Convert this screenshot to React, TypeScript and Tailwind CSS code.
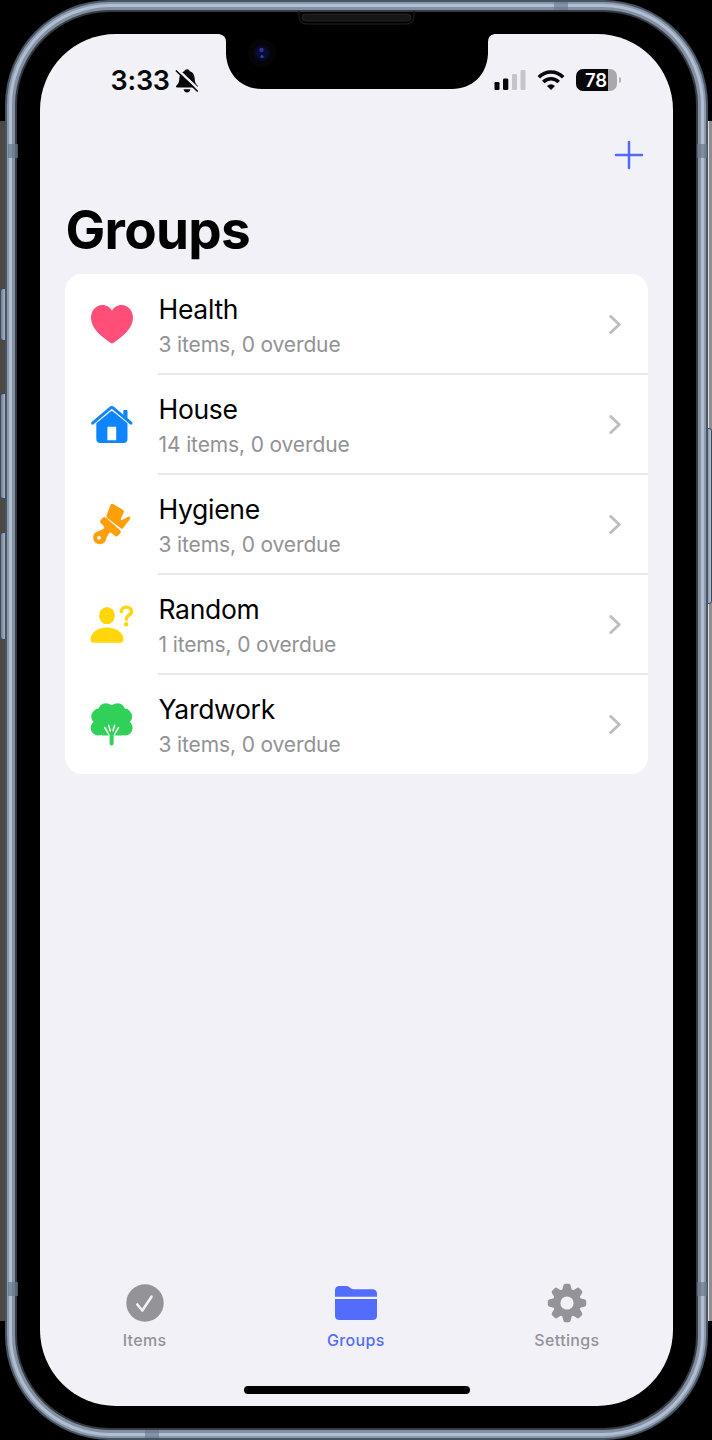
import type { ReactNode } from "react";

type Group = { name: string; count: number; icon: ReactNode };

const Heart = () => (
  <svg viewBox="0 0 44 44" className="size-11 shrink-0" fill="#ff4f78">
    <path d="M22 41.3c-.9 0-1.7-.6-2.700-1.300C9 33.200 1 25 1 15.800 1 8.500 6 3 12.500 3c4.200 0 7.600 2.300 9.500 5.700C23.900 5.300 27.300 3 31.500 3 38 3 43 8.500 43 15.800c0 9.200-8 17.400-18.300 24.200-1 .7-1.800 1.300-2.700 1.300z" />
  </svg>
);

const House = () => (
  <svg viewBox="0 0 44 44" className="size-11 shrink-0" fill="#0f84ff">
    <path d="M33.300 13V9.300c0-.9.5-1.400 1.300-1.400h1.600c.8 0 1.300.5 1.300 1.400v8z" />
    <path d="M2.600 21.200 20.300 6.100q1.500-1.300 3 0L41 21.200" fill="none" stroke="#0f84ff" strokeWidth="2.900" strokeLinecap="round" />
    <path fillRule="evenodd" d="M6.300 21.300 20.600 9.600q1.200-1 2.400 0l14.500 11.700v15.700q0 4-4 4H10.300q-4 0-4-4zM18.300 24.800q-.9 0-.9.900v12.500h8.800v-12.500q0-.9-.9-.9z" />
  </svg>
);

const Brush = () => (
  <svg viewBox="0 0 44 44" className="size-11 shrink-0" fill="#ff9f0a">
    <path d="M16.400 13.800 20.500 3q.8-1.900 2.700-1l10 6q1.200.9.600 2.200l-3 6.600q-.1 1.700 1.300 1.200l5.900-3.300q1.700-.6 2.300.7.300.8-.3 1.600l-7.200 9.400q-.8.900-1.700.1L16.700 15.400q-.7-.7-.3-1.600z" />
    <path fillRule="evenodd" d="M10.700 18l2.200-2.500q1.500-1.200 3 .1l14.200 12.700q1.500 1.500.2 3l-2.200 2.500q-1.500 1.400-3.100.1l-3.500-3q-1.500-.8-2.700.5l-2.500 5.200A6.600 6.600 0 1 1 7.500 29.400l5.700-2.300q1.900-1 .7-2.900l-3.100-3.200q-1.500-1.500-.1-3zM9 33.900a1.900 1.900 0 1 0 .1 3.800 1.900 1.900 0 0 0-.1-3.800z" />
  </svg>
);

const PersonQuestion = () => (
  <svg viewBox="0 0 44 44" className="size-11 shrink-0" fill="#ffd60a">
    <ellipse cx="17" cy="13.700" rx="7.900" ry="8.600" />
    <path d="M3.700 40.800q-3.200 0-3.200-3.300C.5 31.200 7.500 25.600 17 25.600s16.500 5.600 16.500 11.900q0 3.300-3.200 3.300z" />
    <path d="M31.300 9.600c.3-3 2.300-4.500 5-4.500 3 0 5.200 1.600 5.200 4.300 0 3.900-5.200 4-5.200 7.200v.6" fill="none" stroke="#ffd60a" strokeWidth="3.400" strokeLinecap="round" />
    <circle cx="36.100" cy="22.300" r="2.200" />
  </svg>
);

const Tree = () => (
  <svg viewBox="0 0 44 44" className="size-11 shrink-0" fill="#30d158">
    <circle cx="15.800" cy="9" r="7.700" />
    <circle cx="27.500" cy="9" r="7.700" />
    <circle cx="9.200" cy="14.500" r="7.900" />
    <circle cx="34.200" cy="14.500" r="7.900" />
    <circle cx="8.300" cy="25.800" r="7.600" />
    <circle cx="35" cy="25.800" r="7.600" />
    <path d="M4 14h35v12H4zM12 7h20V33.400H12zM18 2.800h7.500v5H18z" />
    <path d="m14.700 25.500 5 8.200M28.600 25.500l-5 8.200M18.600 23.200l1.700 5.500M24.700 23.200l-1.800 5.500" fill="none" stroke="#fff" strokeWidth="1.500" strokeLinecap="round" />
    <path d="M19.600 33q-.5-2-1.500-3.800l2.500 1.800 1-4 1 4 2.500-1.800q-1 1.800-1.500 3.800v8.500q0 1.900-2 1.900t-2-1.900z" />
  </svg>
);

const groups: Group[] = [
  { name: "Health", count: 3, icon: <Heart /> },
  { name: "House", count: 14, icon: <House /> },
  { name: "Hygiene", count: 3, icon: <Brush /> },
  { name: "Random", count: 1, icon: <PersonQuestion /> },
  { name: "Yardwork", count: 3, icon: <Tree /> },
];

function Notch() {
  return (
    <svg className="absolute left-[176px] top-[-26px]" width="278" height="84" viewBox="216 8 278 84">
      <path d="M216 13H494V34.200Q488.200 35 488 42V54C487 75 472 89 452 89H262C242 89 227 75 226 54V42Q226 35 219 34H216z" fill="#000" />
      <path d="M299 11v4q0 9 8 9h99q8 0 8-9v-4" fill="none" stroke="#171717" strokeWidth="1.500" />
      <rect x="302" y="14" width="109" height="7" rx="3.500" fill="#161616" stroke="#292929" strokeWidth=".8" />
      <circle cx="261.800" cy="53" r="14" fill="#040409" />
      <circle cx="261.800" cy="53" r="8.500" fill="#0a0919" />
      <circle cx="261.800" cy="53" r="6" fill="#0b0b3c" />
      <circle cx="261.500" cy="50" r="2.200" fill="#343489" />
      <circle cx="262" cy="56.500" r="1.600" fill="#17558b" />
    </svg>
  );
}

function StatusBar() {
  return (
    <div className="flex h-[92px] items-start justify-between pl-[71px] pr-[52px] pt-[35px]">
      <div className="flex">
        <span className="w-[64px] text-[27px] font-semibold leading-[24px] tracking-[-0.2px] text-[#08080a]">3:33</span>
        <svg width="24" height="24" viewBox="0 0 24 24" fill="#08080a">
          <path d="M12 .3c1.400 0 2.400.8 2.800 2 3.200 1 4.700 3.500 4.900 7.200.2 4 .8 5.200 3 7.300.7.700.3 1.700-.8 1.700H2.100c-1.100 0-1.500-1-.8-1.700 2.200-2.100 2.800-3.300 3-7.300.2-3.700 1.700-6.200 4.900-7.200.4-1.200 1.400-2 2.800-2z" />
          <path d="M8.500 20.200h7q-1 3.200-3.500 3.200t-3.500-3.200z" />
          <path d="m3 .9 21.500 20.200" stroke="#f2f1f7" strokeWidth="2.500" />
          <path d="m1.400 2 20.800 20" stroke="#08080a" strokeWidth="1.700" strokeLinecap="round" />
        </svg>
      </div>
      <div className="flex h-[22px] items-end">
        <svg width="34" height="22" viewBox="0 0 34 22">
          <rect x="1.500" y="13" width="5" height="8" rx="1.300" fill="#08080a" />
          <rect x="10" y="9.500" width="5.300" height="11.500" rx="1.300" fill="#08080a" />
          <rect x="19" y="5" width="5" height="16" rx="1.300" fill="#c5c4c9" />
          <rect x="27.500" y="1" width="5" height="20" rx="1.300" fill="#c5c4c9" />
        </svg>
        <svg className="ml-[10px]" width="28" height="22" viewBox="0 0 28 22">
          <g fill="none" stroke="#08080a" strokeWidth="3.500">
            <path d="M1.800 8.300c6.800-7 17.600-7 24.400 0" />
            <path d="M6.300 12.900c4.300-4.300 11.100-4.300 15.400 0" />
          </g>
          <path d="m14 21-4-4.100q4-3.300 8 0z" fill="#08080a" />
        </svg>
        <div className="ml-[11px] flex h-[22px] w-[41px] items-center justify-center overflow-hidden rounded-[7px] bg-[linear-gradient(to_right,#08080a_32px,#a9a8ad_32px)] text-[18.500px] font-semibold leading-none text-white">
          78
        </div>
        <div className="mb-[8px] ml-[2px] h-[6px] w-[2px] rounded-r-full bg-[#b5b4b9]" />
      </div>
    </div>
  );
}

function GroupRow({ group, last }: { group: Group; last: boolean }) {
  return (
    <li className="relative flex h-[100px] items-center pl-[25px]">
      {group.icon}
      <div className="ml-6 flex h-full flex-1 items-center">
        <div className="ml-[1px] flex-1 pt-[5px]">
          <h2 className="text-[26.500px] leading-[34px] tracking-[-0.3px] text-black">{group.name}</h2>
          <p className="mt-[2px] text-[21px] leading-[34px] tracking-[-0.130px] text-[#929295]">{group.count} items, 0 overdue</p>
        </div>
        <svg className="mr-[26px]" width="14" height="20" viewBox="0 0 14 20" fill="none" stroke="#bfbfc1" strokeWidth="3" strokeLinecap="round" strokeLinejoin="round">
          <path d="m2.800 2.500 8.400 8-8.400 8" />
        </svg>
      </div>
      {!last && <div className="absolute -bottom-px left-[93px] right-0 h-[2px] bg-[#e8e8ea]" />}
    </li>
  );
}

function Tab({ label, active, children }: { label: string; active?: boolean; children: ReactNode }) {
  return (
    <button className={`flex flex-1 flex-col items-center ${active ? "text-[#526dfc]" : "text-[#939398]"}`}>
      <svg width="44" height="40" viewBox="0 0 44 40" fill="currentColor">{children}</svg>
      <span className="mt-[7px] text-[16px] font-medium leading-[20px] tracking-[0.35px]">{label}</span>
    </button>
  );
}

const gearTeeth = [0, 45, 90, 135, 180, 225, 270, 315];

function TabBar() {
  return (
    <nav className="-ml-[0.500px] flex">
      <Tab label="Items">
        <circle cx="22" cy="20" r="18.700" />
        <path d="m14.300 21.500 5 6L28.500 13.700" fill="none" stroke="#f2f1f7" strokeWidth="2.600" strokeLinecap="round" strokeLinejoin="round" />
      </Tab>
      <Tab label="Groups" active>
        <path d="M1 13.800V7.500Q1 3 5.500 3H12q2 0 3.500 1.300l1.300 1q1.300 1 3 1h18.500Q43 6.300 43 11v2.800z" />
        <path d="M1 16h42v16.500q0 4.500-4.500 4.500h-33Q1 37 1 32.500z" />
      </Tab>
      <Tab label="Settings">
        <circle cx="22" cy="20" r="14.200" />
        {gearTeeth.map((angle) => (
          <path key={angle} transform={`rotate(${angle} 22 20)`} d="m17 8 1.300-5.300q.4-1.900 1.900-1.900h3.600q1.500 0 1.900 1.900L27 8z" />
        ))}
        <circle cx="22" cy="20" r="6.600" fill="#f2f1f7" />
      </Tab>
    </nav>
  );
}

function SideButton({ className }: { className: string }) {
  return <div className={`absolute border border-[#3d4855] bg-gradient-to-r from-[#718195] to-[#b2c0d3] ${className}`} />;
}

export default function App() {
  return (
    <div className="relative h-[1440px] w-[712px] overflow-hidden bg-black font-['Inter',sans-serif]">
      <div className="absolute left-0 top-[121px] h-[1200px] w-[5px] bg-[#4b4845]" />
      <div className="absolute right-0 top-[121px] h-[1200px] w-[5px] border-l-2 border-[#dededf] bg-[#928e8e]" />
      <SideButton className="left-0 top-[288px] h-[53px] w-[7px] rounded-l-[3px]" />
      <SideButton className="left-0 top-[393px] h-[106px] w-[7px] rounded-l-[3px]" />
      <SideButton className="left-0 top-[532px] h-[108px] w-[7px] rounded-l-[3px]" />
      <SideButton className="right-0 top-[428px] h-[176px] w-[7px] rounded-r-[3px]" />

      <div className="relative mx-auto h-full w-[703px] rounded-[105px] bg-[#485464] p-[2px]">
        <div className="h-full rounded-[103px] bg-[#8b99ad] p-[2px]">
          <div className="h-full rounded-[101px] bg-[#b1bed2] p-[3px]">
            <div className="h-full rounded-[98px] bg-[#8490a1] p-[3px]">
              <div className="h-full rounded-[95px] bg-[#343c46] p-[2px]">
                <div className="h-full rounded-[93px] bg-black pl-[23px] pr-[23px] pt-[22px]">
                  <main className="relative flex h-[1372px] w-[633px] flex-col rounded-[76px] bg-[#f2f1f7]">
                    <Notch />
                    <StatusBar />
                    <button aria-label="Add group" className="mr-[29px] mt-[14px] self-end">
                      <svg width="30" height="30" viewBox="0 0 30 30" stroke="#5069fb" strokeWidth="2.500" strokeLinecap="round">
                        <path d="M15 2v26M2 15h26" />
                      </svg>
                    </button>
                    <h1 className="ml-[26px] mt-[28px] text-[53px] font-bold leading-[64px] tracking-[-0.700px] text-black">Groups</h1>
                    <ul className="mx-[25px] mt-[12px] overflow-hidden rounded-[17px] bg-white">
                      {groups.map((group, index) => (
                        <GroupRow key={group.name} group={group} last={index === groups.length - 1} />
                      ))}
                    </ul>
                    <div className="mt-auto pb-[12px]">
                      <TabBar />
                      <div className="ml-[204px] mt-[36px] h-[8px] w-[226px] rounded-full bg-black" />
                    </div>
                  </main>
                </div>
              </div>
            </div>
          </div>
        </div>
        <div className="absolute left-[3px] top-[144px] h-[14px] w-[10px] bg-[#68778a]/70" />
        <div className="absolute right-[1px] top-[144px] h-[14px] w-[10px] bg-[#68778a]/70" />
        <div className="absolute bottom-[144px] left-[3px] h-[14px] w-[10px] bg-[#68778a]/70" />
        <div className="absolute bottom-[144px] right-[1px] h-[14px] w-[10px] bg-[#68778a]/70" />
        <div className="absolute left-[549px] top-[2px] h-[8px] w-[14px] bg-[#68778a]/60" />
        <div className="absolute bottom-[2px] left-[140px] h-[8px] w-[14px] bg-[#68778a]/60" />
      </div>
    </div>
  );
}
